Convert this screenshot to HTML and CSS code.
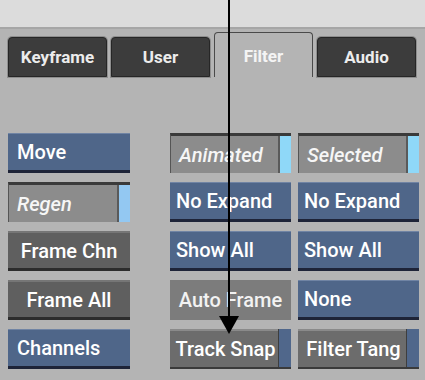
FILE: index.html
```html
<!DOCTYPE html>
<html lang="en">
<head>
    <meta charset="UTF-8">
    <title>Filter Panel</title>
    <link rel="stylesheet" href="styles.css">
</head>
<body>
    <div class="topbar"></div>
    <div class="tabs">
        <div class="tab">Keyframe</div>
        <div class="tab">User</div>
        <div class="tab active">Filter</div>
        <div class="tab">Audio</div>
    </div>
    <div class="panel">
        <div class="col left">
            <button class="btn blue">Move</button>
            <button class="btn toggle regen">Regen</button>
            <button class="btn dark">Frame Chn</button>
            <button class="btn dark">Frame All</button>
            <button class="btn blue">Channels</button>
        </div>
        <div class="col">
            <button class="btn toggle">Animated</button>
            <button class="btn blue">No Expand</button>
            <button class="btn blue">Show All</button>
            <button class="btn flat">Auto Frame</button>
            <button class="btn snap">Track Snap</button>
        </div>
        <div class="col">
            <button class="btn toggle">Selected</button>
            <button class="btn blue">No Expand</button>
            <button class="btn blue">Show All</button>
            <button class="btn blue">None</button>
            <button class="btn snap">Filter Tang</button>
        </div>
    </div>
    <div class="pointer">
        <div class="line"></div>
        <div class="head"></div>
    </div>
</body>
</html>
```

FILE: styles.css
```css
*{
    margin: 0px;
    padding: 0px;
    box-sizing: border-box;
}

body{
    width: 425px;
    height: 380px;
    overflow: hidden;
    background-color: #b4b4b4;
    font-family: Roboto, "Liberation Sans", sans-serif;
    position: relative;
}

.topbar{
    height: 29px;
    background-color: #dcdcdc;
    border-bottom: 2px solid #a6a6a6;
}

.tabs{
    height: 48px;
    display: flex;
    align-items: flex-end;
    gap: 4px;
    padding-left: 8px;
}

.tab{
    width: 99px;
    height: 40px;
    background-color: #3c3c3c;
    border: 1px solid #262626;
    box-shadow: 0 0 0 1px #8e8e8e;
    border-radius: 4px 4px 0 0;
    color: #ececec;
    font-size: 17px;
    font-weight: 700;
    display: flex;
    justify-content: center;
    align-items: center;
}

.tab.active{
    height: 45px;
    background-color: #b4b4b4;
    border: 1px solid #4a4a4a;
    border-bottom: none;
    box-shadow: none;
    color: #f4f4f4;
    padding-top: 2px;
}

.panel{
    display: flex;
    padding: 56px 0 0 8px;
    gap: 7px;
}

.col{
    display: flex;
    flex-direction: column;
    gap: 9px;
    width: 121px;
}

.left{
    width: 122px;
    margin-right: 33px;
}

.btn{
    height: 40px;
    border: none;
    color: #fff;
    font-family: Roboto, "Liberation Sans", sans-serif;
    font-size: 20px;
    font-weight: 500;
    text-align: left;
    padding: 0 8px;
    display: flex;
    align-items: center;
    position: relative;
    white-space: nowrap;
}

.blue{
    background-color: #4f6689;
    border-top: 1px solid #7084a4;
    border-bottom: 3px solid #1e2438;
    padding-left: 6px;
}

.left .blue{
    padding-left: 9px;
}

.toggle{
    background-color: #8c8c8c;
    border-top: 3px solid #3a3a3a;
    border-left: 1px solid #555;
    font-style: italic;
    color: #f6f6f6;
}

.toggle::after{
    content: "";
    position: absolute;
    top: 0;
    right: 0;
    bottom: 0;
    width: 11px;
    background-color: #8fd8f8;
    border-left: 2px solid #5a5a5a;
}

.regen::after{
    background-color: #93c8f2;
}

.dark{
    background-color: #5f5f5f;
    border-top: 2px solid #767676;
    border-bottom: 3px solid #2c2c2c;
    justify-content: center;
}

.flat{
    background-color: #7c7c7c;
    justify-content: center;
    color: #f2f2f2;
}

.snap{
    background-color: #6c6c6c;
    border-top: 2px solid #8a8a8a;
    border-bottom: 2px solid #3a3a3a;
    padding: 0 14px 0 4px;
    justify-content: center;
}

.snap::after{
    content: "";
    position: absolute;
    top: -2px;
    right: 0;
    bottom: 0;
    width: 12px;
    background-color: #50678b;
    border-left: 1px solid #3e3e3e;
}

.pointer{
    position: absolute;
    left: 219px;
    top: 0;
    width: 20px;
}

.line{
    margin: 0 auto;
    width: 2px;
    height: 316px;
    background-color: #000;
}

.head{
    width: 0;
    height: 0;
    border-left: 10px solid transparent;
    border-right: 10px solid transparent;
    border-top: 18px solid #000;
}
```
